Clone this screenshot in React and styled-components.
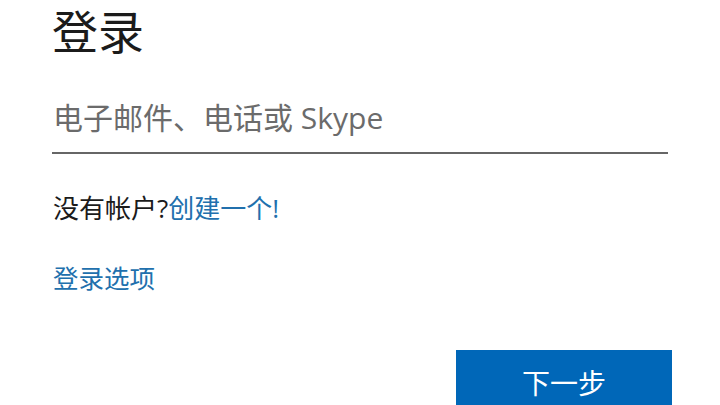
import styled, { createGlobalStyle } from "styled-components";

const GlobalStyle = createGlobalStyle`
  html, body {
    margin: 0;
    padding: 0;
    background: #ffffff;
  }
  body {
    font-family: "Open Sans", "Noto Sans CJK SC", sans-serif;
    overflow: hidden;
  }
`;

export default function App() {
  return (
    <>
      <GlobalStyle />
      <STPage>
        <STTitle>登录</STTitle>
        <STField>
          <STInput placeholder="电子邮件、电话或 Skype" />
        </STField>
        <STLine>
          没有帐户?<STLink href="#">创建一个!</STLink>
        </STLine>
        <STOptions href="#">登录选项</STOptions>
        <STActions>
          <STButton>下一步</STButton>
        </STActions>
      </STPage>
    </>
  );
}

const STPage = styled.div`
  width: 620px;
  padding: 0 0 0 52px;
  display: flex;
  flex-direction: column;
`;

const STTitle = styled.h1`
  margin: 0;
  font-family: "Noto Sans CJK SC", sans-serif;
  font-size: 46px;
  font-weight: 400;
  line-height: 58px;
  color: #1b1b1b;
`;

const STField = styled.div`
  margin-top: 24px;
  width: 616px;
  border-bottom: 2px solid #666666;
`;

const STInput = styled.input`
  width: 100%;
  box-sizing: border-box;
  border: none;
  outline: none;
  background: transparent;
  padding: 0 0 0 1px;
  height: 70px;
  font-family: "Open Sans", "Noto Sans CJK SC", sans-serif;
  font-size: 30px;
  color: #1b1b1b;

  &::placeholder {
    color: #6b6b6b;
  }
`;

const STLine = styled.div`
  margin-top: 36px;
  padding-left: 1px;
  font-size: 26px;
  line-height: 36px;
  color: #1b1b1b;
`;

const STLink = styled.a`
  color: #2170ad;
  text-decoration: none;
`;

const STOptions = styled.a`
  margin-top: 34px;
  padding-left: 1px;
  font-size: 25.5px;
  line-height: 36px;
  color: #2170ad;
  text-decoration: none;
  align-self: flex-start;
`;

const STActions = styled.div`
  margin-top: 54px;
  width: 620px;
  display: flex;
  justify-content: flex-end;
`;

const STButton = styled.button`
  width: 216px;
  height: 64px;
  border: none;
  background: #0067b8;
  color: #ffffff;
  font-family: "Noto Sans CJK SC", sans-serif;
  font-size: 28px;
  padding: 0;
`;
